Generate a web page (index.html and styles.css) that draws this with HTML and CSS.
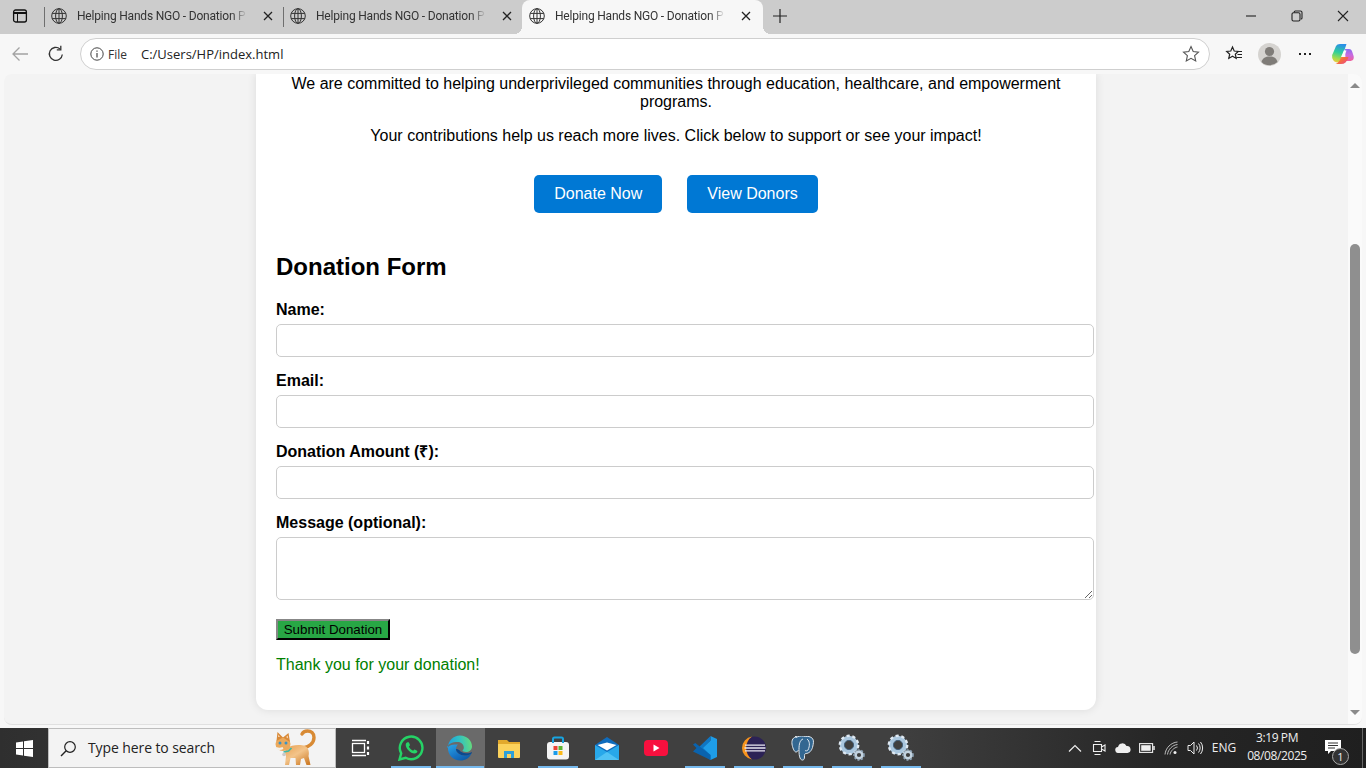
FILE: index.html
```html
<!DOCTYPE html>
<html lang="en">
<head>
    <meta charset="UTF-8">
    <meta name="viewport" content="width=device-width, initial-scale=1.0">
    <title>Helping Hands NGO - Donation Page</title>
    <link rel="stylesheet" href="styles.css">
</head>
<body>
    <svg class="defs" width="0" height="0">
        <symbol id="globe" viewBox="0 0 16 16"><g fill="none" stroke="#333" stroke-width="1"><circle cx="8" cy="8" r="7.3"/><ellipse cx="8" cy="8" rx="3.4" ry="7.3"/><path d="M8 .7v14.6M1.2 5.4h13.6M1.2 10.6h13.6"/></g></symbol>
        <symbol id="close" viewBox="0 0 10 10"><path d="M1 1l8 8M9 1l-8 8" stroke="#222" stroke-width="1.3" fill="none"/></symbol>
        <symbol id="gear" viewBox="0 0 28 28">
            <g fill="none">
                <circle cx="11" cy="11" r="7" stroke="#a9c6de" stroke-width="4.6"/>
                <circle cx="11" cy="11" r="9.2" stroke="#dfe9f2" stroke-width="2.4" stroke-dasharray="3.2 2.6"/>
                <circle cx="11" cy="11" r="4.6" stroke="#44607a" stroke-width="1"/>
                <circle cx="21" cy="21" r="3.4" stroke="#c3d3e0" stroke-width="2.6"/>
                <circle cx="21" cy="21" r="5" stroke="#8fa5b8" stroke-width="1.6" stroke-dasharray="2 1.6"/>
            </g>
        </symbol>
    </svg>

    <div class="tabstrip">
        <div class="tab-menu">
            <svg width="16" height="16" viewBox="0 0 16 16"><rect x="1.6" y="2" width="12.8" height="12" rx="2" fill="none" stroke="#111" stroke-width="1.3"/><path d="M1.6 5h12.8" stroke="#111" stroke-width="2"/><path d="M5.500 5v9" stroke="#111" stroke-width="1"/></svg>
        </div>
        <div class="tab tab-sep">
            <svg class="tab-globe"><use href="#globe"/></svg>
            <span class="tab-title">Helping Hands NGO - Donation P</span>
            <svg class="tab-close"><use href="#close"/></svg>
        </div>
        <div class="tab tab-sep">
            <svg class="tab-globe"><use href="#globe"/></svg>
            <span class="tab-title">Helping Hands NGO - Donation P</span>
            <svg class="tab-close"><use href="#close"/></svg>
        </div>
        <div class="tab tab-active">
            <svg class="tab-globe"><use href="#globe"/></svg>
            <span class="tab-title">Helping Hands NGO - Donation P</span>
            <svg class="tab-close"><use href="#close"/></svg>
        </div>
        <svg class="new-tab" width="16" height="16" viewBox="0 0 16 16"><path d="M8 1v14M1 8h14" stroke="#222" stroke-width="1.2"/></svg>
        <div class="win-controls">
            <svg width="12" height="12" viewBox="0 0 12 12"><path d="M1 6h10" stroke="#222" stroke-width="1.1"/></svg>
            <svg width="12" height="12" viewBox="0 0 12 12"><rect x="1" y="2.800" width="8" height="8.200" rx="1.500" fill="none" stroke="#222" stroke-width="1.100"/><path d="M3.200 2.600V2a1 1 0 0 1 1-1H9.500a1.500 1.500 0 0 1 1.500 1.500V8a1 1 0 0 1-1 1" fill="none" stroke="#222" stroke-width="1.100"/></svg>
            <svg width="12" height="12" viewBox="0 0 12 12"><path d="M1 1l10 10M11 1L1 11" stroke="#222" stroke-width="1.1"/></svg>
        </div>
    </div>

    <div class="toolbar">
        <svg class="nav-back" width="18" height="16" viewBox="0 0 18 16"><path d="M17 8H2M8.500 1.500L2 8l6.500 6.500" fill="none" stroke="#a3a3a3" stroke-width="1.3"/></svg>
        <svg class="nav-reload" width="18" height="18" viewBox="0 0 18 18"><path d="M15.300 9.500A6.500 6.500 0 1 1 13 3.900" fill="none" stroke="#333" stroke-width="1.3"/><path d="M13.800 .8v4h-4" fill="none" stroke="#333" stroke-width="1.3"/></svg>
        <div class="addressbar">
            <svg width="14" height="14" viewBox="0 0 14 14"><circle cx="7" cy="7" r="6.200" fill="none" stroke="#444" stroke-width="1"/><path d="M7 6v4.500M7 3.500v1.300" stroke="#444" stroke-width="1.200"/></svg>
            <span class="addr-scheme">File</span>
            <span class="addr-url">C:/Users/HP/index.html</span>
            <svg class="addr-star" width="18" height="18" viewBox="0 0 18 18"><path d="M9 1.600l2.200 4.900 5.300.6-3.900 3.600 1.100 5.300L9 13.300 4.300 16l1.100-5.300-3.900-3.600 5.300-.6z" fill="none" stroke="#555" stroke-width="1.100"/></svg>
        </div>
        <svg class="tool-fav" width="18" height="18" viewBox="0 0 18 18"><path d="M7.500 2l1.700 4 4.100.4-3 2.800.9 4.200-3.700-2.200-3.700 2.200.9-4.200-3-2.800 4.100-.4z" fill="none" stroke="#222" stroke-width="1.200"/><path d="M12 6.500h5M12.500 9.500h4.500M11.500 12.500h5.500" stroke="#222" stroke-width="1"/></svg>
        <svg class="tool-avatar" width="23" height="23" viewBox="0 0 23 23"><circle cx="11.500" cy="11.500" r="11.500" fill="#d5d3d0"/><circle cx="11.500" cy="8.500" r="4.600" fill="#7f7c78"/><path d="M3.500 19c1-4 4-5.500 8-5.500s7 1.500 8 5.500a11.500 11.500 0 0 1-16 0z" fill="#7f7c78"/></svg>
        <div class="tool-more"><i></i><i></i><i></i></div>
        <svg class="tool-copilot" width="23" height="22" viewBox="0 0 23 22">
            <defs>
                <linearGradient id="copA" x1="0.500" y1="0" x2="0.300" y2="1"><stop offset="0" stop-color="#2a8fe8"/><stop offset="0.450" stop-color="#2fcf9a"/><stop offset="0.800" stop-color="#a8dc4a"/><stop offset="1" stop-color="#f3c83c"/></linearGradient>
                <linearGradient id="copB" x1="0.500" y1="0" x2="0.500" y2="1"><stop offset="0" stop-color="#8a6cf0"/><stop offset="0.500" stop-color="#c96ae0"/><stop offset="1" stop-color="#f0609a"/></linearGradient>
                <linearGradient id="copC" x1="0" y1="0" x2="1" y2="0.700"><stop offset="0" stop-color="#f7b53c"/><stop offset="0.500" stop-color="#f5703a"/><stop offset="1" stop-color="#ec4a80"/></linearGradient>
            </defs>
            <path d="M14 6h4q2.500 0 3.300 3l1.300 4q.9 4.500-3 5h-5z" fill="url(#copB)"/>
            <path d="M5 3q1-2 4-2h6.500l-2 6-3 8-3 4.500q-5 0-6.300-4.500-.8-3 1.300-6z" fill="url(#copA)"/>
            <path d="M10 14h7.500q-.8 3.500-3 5.500-1.700 1.500-4.500 1.500H4.500q3.500-1 5.500-7z" fill="url(#copC)"/>
            <path d="M12.800 7.500h2.700l-2.500 6.500h-3z" fill="#fbfbfb"/>
        </svg>
    </div>

    <div class="viewport">
        <div class="page">
            <div class="card">
                <p class="intro">We are committed to helping underprivileged communities through education, healthcare, and empowerment programs.</p>
                <p class="intro">Your contributions help us reach more lives. Click below to support or see your impact!</p>
                <div class="actions">
                    <a class="btn" href="#form">Donate Now</a>
                    <a class="btn" href="#donors">View Donors</a>
                </div>
                <form id="form" class="donation-form">
                    <h2>Donation Form</h2>
                    <label for="name">Name:</label>
                    <input id="name" type="text">
                    <label for="email">Email:</label>
                    <input id="email" type="email">
                    <label for="amount">Donation Amount (₹):</label>
                    <input id="amount" type="number">
                    <label for="message">Message (optional):</label>
                    <textarea id="message"></textarea>
                    <button class="submit" type="button">Submit Donation</button>
                    <p class="thanks">Thank you for your donation!</p>
                </form>
            </div>
        </div>
        <div class="scrollbar">
            <span class="arrow-up"></span>
            <div class="track"><div class="thumb"></div></div>
            <span class="arrow-down"></span>
        </div>
    </div>

    <div class="taskbar">
        <div class="start">
            <svg width="17" height="17" viewBox="0 0 17 17"><path d="M0 2.400L7 1.400V8H0zM8 1.300L17 0v8H8zM0 9h7v6.600L0 14.600zM8 9h9v8l-9-1.300z" fill="#fff"/></svg>
        </div>
        <div class="search">
            <svg width="17" height="17" viewBox="0 0 17 17"><circle cx="10" cy="7" r="5.300" fill="none" stroke="#222" stroke-width="1.200"/><path d="M6.200 10.800L1 16" stroke="#222" stroke-width="1.400"/></svg>
            <span class="search-text">Type here to search</span>
            <svg class="cat" width="44" height="38" viewBox="0 0 44 38">
                <defs>
                    <linearGradient id="catBody" x1="0" y1="0" x2="0.800" y2="1"><stop offset="0" stop-color="#e8a050"/><stop offset="0.500" stop-color="#f3c48a"/><stop offset="1" stop-color="#cf7f2c"/></linearGradient>
                </defs>
                <path d="M29 19c6-1 11-5 11-10.500C40 4 37 2 33.500 2 31 2 29 3 28 5" fill="none" stroke="#d88a34" stroke-width="3.400" stroke-linecap="round"/>
                <path d="M13 19c4-3 13-4 18-2 3.500 1.500 4.500 6 3.500 10l2 9h-4l-2.500-7-3 1-1 6h-4l-.5-7h-5l-1.500 7h-4l1-9c-1.500-2.500-1-6 1-8z" fill="url(#catBody)"/>
                <ellipse cx="9" cy="15" rx="7.500" ry="7" fill="#eba95c"/>
                <path d="M2.500 12L3.500 3 9 8.500zM9 8.500L14.500 4 16 13z" fill="#d98a38"/>
                <path d="M4 8l.3-2.500L6 8zM12 8l1.800-1.500.4 3z" fill="#f6d3ae"/>
                <circle cx="6" cy="14" r="1.500" fill="#3a93c4"/>
                <circle cx="12" cy="14" r="1.500" fill="#3a93c4"/>
                <path d="M2 19c2 1 5 1 7 0" stroke="#f5f1ea" stroke-width="2" fill="none"/>
                <path d="M9.500 23l5-1 3-3" stroke="#3bb8a8" stroke-width="1.600" fill="none"/>
                <circle cx="10" cy="25.500" r="1.800" fill="#c9c9c9"/>
            </svg>
        </div>
        <div class="task-icons">
            <div class="task">
                <svg class="task-view" width="20" height="20" viewBox="0 0 20 20"><g fill="none" stroke="#fff" stroke-width="1.300"><rect x="1.500" y="5.500" width="12" height="9"/><path d="M1 2.500h14M1 17.500h14"/></g><path d="M17 3v3M17 8.500v3M17 14v3" stroke="#fff" stroke-width="2.200"/></svg>
            </div>
            <div class="task open">
                <svg width="26" height="26" viewBox="0 0 26 26"><path d="M1.500 24.500l1.700-6.200A11.300 11.300 0 1 1 7.700 22.800z" fill="none" stroke="#25d366" stroke-width="2.400"/><path d="M9.500 7.200c-.6 0-1.800.8-1.800 2.800 0 3.500 5 8.500 8.700 8.500 2 0 3-1.300 3-2.300 0-.5-2.600-2-3.100-1.800l-1.200 1.400c-1.600-.5-3.700-2.500-4.300-4.200l1.100-1.200c.3-.4-.9-3.200-1.400-3.200z" fill="#25d366"/></svg>
            </div>
            <div class="task active">
                <svg width="26" height="26" viewBox="0 0 26 26">
                    <defs>
                        <linearGradient id="edgeA" x1="0" y1="0.500" x2="1" y2="0.400"><stop offset="0" stop-color="#1b9de2"/><stop offset="0.500" stop-color="#2fc0c4"/><stop offset="1" stop-color="#66db7a"/></linearGradient>
                        <linearGradient id="edgeB" x1="0" y1="0" x2="0.800" y2="1"><stop offset="0" stop-color="#2aa5e6"/><stop offset="0.600" stop-color="#1672c4"/><stop offset="1" stop-color="#0c59a4"/></linearGradient>
                    </defs>
                    <path d="M1 12.500C1 5.500 6.500 .5 13 .5c7 0 12 5 12 11 0 3.500-3 5.500-6 5.500-2 0-3.500-.7-3.500-1.700 1-.7 1.300-1.500 1.300-2.800 0-3-2.500-5.500-6-5.500-5.800 0-9.800 2-10.800 5.500z" fill="url(#edgeA)"/>
                    <path d="M1 12.500c-.5 7 5 13 12.500 13 5 0 9-2.500 11-7-2 1.500-4.500 2-6.500 2-5 0-9-3-9-6.500 0-2 1-3.500 2-4.500-5 0-9 .5-10 3z" fill="url(#edgeB)"/>
                    <path d="M9 14c0 3.500 4 6.500 9 6.500 2 0 4.500-.5 6.500-2 .3-.6.400-1 .5-1.500-1.500 1-4 1.500-6 1.300-3-.3-5.500-1.300-6.500-3-1.500-1-2.800-1.500-3.500-1.300z" fill="#0b4a8f"/>
                </svg>
            </div>
            <div class="task">
                <svg width="24" height="22" viewBox="0 0 24 22"><path d="M1 3h9l2 2h11v3H1z" fill="#e2a92d"/><path d="M1 7h22v13a1 1 0 0 1-1 1H2a1 1 0 0 1-1-1z" fill="#fbd25c"/><path d="M7 21v-7h10v7h-3v-4h-4v4z" fill="#2e9fd8"/></svg>
            </div>
            <div class="task open">
                <svg width="24" height="24" viewBox="0 0 24 24"><rect x="1" y="6" width="22" height="17.500" rx="3" fill="#f4f4f4"/><path d="M7 7V3a1.500 1.500 0 0 1 1.500-1.500h7A1.500 1.500 0 0 1 17 3v4" fill="none" stroke="#18a4e0" stroke-width="2"/><rect x="7.500" y="10" width="4" height="4" fill="#ea4335"/><rect x="12.500" y="10" width="4" height="4" fill="#5cb531"/><rect x="7.500" y="15" width="4" height="4" fill="#1a9bea"/><rect x="12.500" y="15" width="4" height="4" fill="#fcba19"/></svg>
            </div>
            <div class="task">
                <svg width="24" height="23" viewBox="0 0 24 23"><path d="M0 8L12 0l12 8v2L12 17 0 10z" fill="#0f6cbd"/><path d="M0 8l12 7 12-7v15H0z" fill="#28a8ea"/><path d="M2.500 8L12 13.500 21.500 8 12 5.500z" fill="#fff"/><path d="M0 23l12-8 12 8z" fill="#50c2f4"/></svg>
            </div>
            <div class="task">
                <svg width="24" height="16" viewBox="0 0 24 16"><rect width="24" height="16" rx="4" fill="#f8103e"/><path d="M9.500 4.500v7l6-3.500z" fill="#fff"/></svg>
            </div>
            <div class="task open">
                <svg width="24" height="24" viewBox="0 0 24 24"><path d="M17.500 0L24 3v18l-6.500 3L7 14l10.500-9.500z" fill="#1e9de8"/><path d="M17.500 4.500V0L5 12l12.500 12v-5L10 12z" fill="#0f76c4"/><path d="M0 8.500L2.300 7 17.500 19v5L0 15.500 3.500 12z" fill="#0a63ae"/></svg>
            </div>
            <div class="task open">
                <svg width="24" height="24" viewBox="0 0 24 24"><circle cx="12.500" cy="12" r="11.500" fill="#2c2255"/><path d="M10 .6A11.500 11.500 0 0 0 10 23.400 14 14 0 0 1 10 .6z" fill="#f7941e"/><path d="M3 9.200h20M2.500 12h21M3 14.800h20" stroke="#e9e7f2" stroke-width="1.300"/></svg>
            </div>
            <div class="task open">
                <svg width="24" height="25" viewBox="0 0 24 25"><path d="M6 1C2 1 .5 4 1 8c.4 3 2 8 4 8 1.500 0 2-1.500 3-2.500 0 3 0 7 1.500 9.500 2 2 4 1 4-2 0-2 0-3 1-3.500 4 0 6-3 7-6 1-4 1.500-7 0-9-2-2-5-2.500-7-2-2-.5-6-1-8.500.5-1-.3-1.500-.5-2-.5z" fill="#336791" stroke="#dfe7ee" stroke-width="1"/><path d="M12 3c-3 1-4 5-4 10M16 3c3 2 3 7 1 11-1 1-2 1-3 .5" fill="none" stroke="#dfe7ee" stroke-width="1"/></svg>
            </div>
            <div class="task open"><svg width="28" height="28"><use href="#gear"/></svg></div>
            <div class="task open"><svg width="28" height="28"><use href="#gear"/></svg></div>
        </div>
        <div class="tray">
            <span class="tray-item"><svg width="14" height="8" viewBox="0 0 14 8"><path d="M1 7.500L7 1.500l6 6" fill="none" stroke="#eee" stroke-width="1.200"/></svg></span>
            <span class="tray-item"><svg width="14" height="16" viewBox="0 0 14 16"><path d="M1.500 4.500h8v7h-8zM9.500 7l3.500-2v6l-3.500-2z" fill="none" stroke="#eee" stroke-width="1.100"/><path d="M2.500 1.500h6M2.500 14.500h6" stroke="#eee" stroke-width="1"/></svg></span>
            <span class="tray-item"><svg width="16" height="10" viewBox="0 0 16 10"><path d="M3.500 10a3 3 0 0 1-.5-6 4.500 4.500 0 0 1 8.500-1 3.500 3.500 0 0 1 1 7z" fill="#eee"/></svg></span>
            <span class="tray-item"><svg width="16" height="10" viewBox="0 0 16 10"><rect x=".6" y=".6" width="13" height="8.800" fill="none" stroke="#eee" stroke-width="1.100"/><rect x="2.200" y="2.200" width="9.500" height="5.600" fill="#eee"/><path d="M15 3v4" stroke="#eee" stroke-width="1.500"/></svg></span>
            <span class="tray-item"><svg width="14" height="14" viewBox="0 0 14 14"><path d="M1 13.500C1.500 7 7 1.500 13.500 1M3.500 13.500C4 8.500 8.500 4 13.500 3.500M6 13.500C6.500 10 10 6.500 13.500 6" fill="none" stroke="#bbb" stroke-width="1"/><circle cx="11" cy="11.500" r="1.500" fill="#eee"/></svg></span>
            <span class="tray-item"><svg width="17" height="14" viewBox="0 0 17 14"><path d="M1 4.500h2.500L7 1v12L3.500 9.500H1z" fill="none" stroke="#eee" stroke-width="1"/><path d="M9.500 4.500a4 4 0 0 1 0 5M11.500 2.500a7 7 0 0 1 0 9M13.500 1a9.500 9.500 0 0 1 0 12" fill="none" stroke="#eee" stroke-width="1"/></svg></span>
            <span class="tray-lang">ENG</span>
            <div class="tray-clock">
                <span>3:19 PM</span>
                <span>08/08/2025</span>
            </div>
            <div class="tray-notify">
                <svg width="16" height="14" viewBox="0 0 16 14"><path d="M0 0h16v11H6l-3 3v-3H0z" fill="#fff"/><path d="M3 3h10M3 5.500h10M3 8h7" stroke="#333" stroke-width="1"/></svg>
                <span class="notify-badge">1</span>
            </div>
            <div class="show-desktop"></div>
        </div>
    </div>
</body>
</html>
```

FILE: styles.css
```css
* {
    box-sizing: border-box;
}
html, body {
    margin: 0;
    height: 100%;
    overflow: hidden;
}
body {
    display: flex;
    flex-direction: column;
    height: 768px;
    background-color: #f7f7f7;
    font-family: "Liberation Sans", Arial, sans-serif;
    color: #000;
}
.defs {
    position: absolute;
}

/* browser tabs */
.tabstrip {
    display: flex;
    align-items: center;
    flex: 0 0 34px;
    background-color: #cccccc;
    font-family: Roboto, sans-serif;
}
.tab-menu {
    display: flex;
    justify-content: center;
    width: 40px;
    margin-right: 4px;
    padding-bottom: 2px;
}
.tab {
    position: relative;
    display: flex;
    align-items: center;
    width: 239px;
    height: 34px;
    padding: 0 0 3px 7px;
}
.tab-sep::before {
    content: "";
    position: absolute;
    left: 0;
    top: 7px;
    height: 20px;
    border-left: 1px solid #6f6f6f;
}
.tab-active {
    width: 241px;
    background-color: #f7f7f7;
    border-radius: 8px 8px 0 0;
}
.tab-active::before,
.tab-active::after {
    content: "";
    position: absolute;
    bottom: 0;
    width: 8px;
    height: 8px;
}
.tab-active::before {
    left: -8px;
    background: radial-gradient(circle at 0 0, transparent 8px, #f7f7f7 8px);
}
.tab-active::after {
    right: -8px;
    background: radial-gradient(circle at 100% 0, transparent 8px, #f7f7f7 8px);
}
.tab-globe {
    width: 16px;
    height: 16px;
    flex: none;
}
.tab-title {
    width: 170px;
    margin-left: 10px;
    white-space: nowrap;
    font-size: 12px;
    letter-spacing: -0.2px;
    color: #333;
    -webkit-mask-image: linear-gradient(to right, #000 155px, transparent 170px);
    mask-image: linear-gradient(to right, #000 155px, transparent 170px);
}
.tab-close {
    width: 10px;
    height: 10px;
    margin-left: 16px;
    flex: none;
}
.new-tab {
    margin: 0 0 3px 9px;
}
.win-controls {
    display: flex;
    gap: 34px;
    margin-left: auto;
    padding: 0 17px 2px 0;
}

/* address row */
.toolbar {
    display: flex;
    align-items: center;
    flex: 0 0 40px;
    padding-left: 11px;
    background-color: #f7f7f7;
}
.nav-back {
    flex: none;
}
.nav-reload {
    flex: none;
    margin-left: 18px;
}
.addressbar {
    display: flex;
    align-items: center;
    width: 1130px;
    height: 32px;
    margin-left: 15px;
    padding: 0 9px 0 9px;
    background-color: #fff;
    border: 1px solid #cfcfcf;
    border-radius: 16px;
    font-family: "Open Sans", sans-serif;
    font-size: 12px;
}
.addr-scheme {
    margin-left: 4px;
    color: #333;
}
.addr-url {
    margin-left: 14px;
    font-size: 13px;
    color: #222;
}
.addr-star {
    margin-left: auto;
}
.tool-fav {
    margin-left: 15px;
    flex: none;
}
.tool-avatar {
    margin-left: 15px;
    flex: none;
}
.tool-more {
    display: flex;
    gap: 3px;
    margin-left: 18px;
}
.tool-more i {
    width: 2px;
    height: 2px;
    background-color: #222;
}
.tool-copilot {
    margin-left: 20px;
    flex: none;
}

/* rendered page */
.viewport {
    display: flex;
    flex: 0 0 651px;
    margin: 0 4px;
    background-color: #f3f3f3;
    border-bottom: 1px solid #e0e0e0;
    border-radius: 8px;
    overflow: hidden;
}
.page {
    flex: 1;
    overflow: hidden;
}
.card {
    width: 840px;
    margin: 0 auto;
    padding: 1px 20px 20px;
    background-color: #fff;
    border-radius: 0 0 12px 12px;
    box-shadow: 0 0 10px rgba(0, 0, 0, 0.1);
}
.intro {
    margin: 0 0 16px;
    font-size: 16px;
    text-align: center;
}
.actions {
    display: flex;
    justify-content: center;
    gap: 25px;
    margin-top: 30px;
}
.btn {
    padding: 10px 20px;
    font-size: 16px;
    color: #fff;
    text-decoration: none;
    background-color: #0078d4;
    border-radius: 5px;
}
.donation-form {
    margin-top: 40px;
}
.donation-form h2 {
    margin: 0 0 20px;
    font-size: 24px;
    line-height: 28px;
}
.donation-form label {
    display: block;
    margin-bottom: 5px;
    font-size: 16px;
    line-height: 18px;
    font-weight: bold;
}
.donation-form input,
.donation-form textarea {
    display: block;
    width: 818px;
    margin-bottom: 15px;
    padding: 8px;
    font-family: "Liberation Sans", Arial, sans-serif;
    font-size: 13.33px;
    background-color: #fff;
    border: 1px solid #ccc;
    border-radius: 5px;
}
.donation-form textarea {
    height: 63px;
    margin-bottom: 19px;
}
.submit {
    display: block;
    width: 114px;
    height: 21px;
    padding: 0;
    font-family: "Liberation Sans", Arial, sans-serif;
    font-size: 13.33px;
    color: #000;
    background-color: #28a745;
    border: 2px outset #333;
}
.thanks {
    margin: 16px 0;
    font-size: 16px;
    color: #008000;
}

/* page scrollbar */
.scrollbar {
    display: flex;
    flex-direction: column;
    align-items: center;
    flex: 0 0 14px;
    background-color: #fafafa;
}
.arrow-up, .arrow-down {
    flex: none;
    width: 0;
    height: 0;
    margin: 9px 0;
    border: 5px solid transparent;
    border-top: 0;
    border-bottom: 5px solid #8a8a8a;
}
.arrow-down {
    border-bottom: 0;
    border-top: 5px solid #8a8a8a;
}
.track {
    flex: 1;
    width: 100%;
    padding: 147px 2px 0;
}
.thumb {
    width: 10px;
    height: 410px;
    background-color: #8f8f8f;
    border-radius: 5px;
}

/* windows taskbar */
.taskbar {
    display: flex;
    flex: 0 0 40px;
    margin-top: 3px;
    background: linear-gradient(to right, #2f2f2f, #404040 25%, #404040 65%, #262626 85%, #1f1f1f);
    font-family: "Open Sans", sans-serif;
}
.start {
    display: flex;
    align-items: center;
    justify-content: center;
    width: 48px;
}
.search {
    display: flex;
    align-items: center;
    width: 288px;
    padding-left: 11px;
    background-color: #f3f3f3;
    border: 1px solid #bdbdbd;
}
.search-text {
    margin: 0 0 1px 11px;
    font-size: 14px;
    color: #222;
    letter-spacing: -0.1px;
}
.cat {
    margin-left: auto;
    margin-right: 17px;
}
.task-icons {
    display: flex;
    margin-left: 2px;
}
.task {
    position: relative;
    display: flex;
    align-items: center;
    justify-content: center;
    width: 49px;
    height: 40px;
    padding-right: 2px;
}
.task-view {
    margin-right: 2px;
}
.task.open::after,
.task.active::after {
    content: "";
    position: absolute;
    left: 4px;
    right: 5px;
    bottom: 0;
    height: 2px;
    background-color: #76b9ed;
}
.task.active {
    background-color: #6a6a6a;
}
.task.active::after {
    left: 0;
    right: 1px;
}
.tray {
    display: flex;
    align-items: center;
    margin-left: auto;
    color: #eee;
}
.tray-item {
    display: flex;
    justify-content: center;
    width: 24px;
}
.tray-lang {
    width: 34px;
    padding-bottom: 2px;
    font-size: 12px;
    text-align: center;
}
.tray-clock {
    display: flex;
    flex-direction: column;
    align-items: center;
    width: 72px;
    padding-bottom: 2px;
    font-size: 12px;
    line-height: 18px;
    letter-spacing: -0.4px;
}
.tray-notify {
    position: relative;
    display: flex;
    width: 24px;
    height: 28px;
    margin-left: 8px;
    padding: 6px 0 0 4px;
}
.notify-badge {
    position: absolute;
    right: -4px;
    top: 14px;
    width: 17px;
    height: 17px;
    font-size: 11px;
    line-height: 15px;
    text-align: center;
    color: #eee;
    background-color: #333;
    border: 1px solid #aaa;
    border-radius: 50%;
}
.show-desktop {
    width: 4px;
    height: 40px;
    margin-left: 17px;
    border-left: 1px solid #666;
}
```
